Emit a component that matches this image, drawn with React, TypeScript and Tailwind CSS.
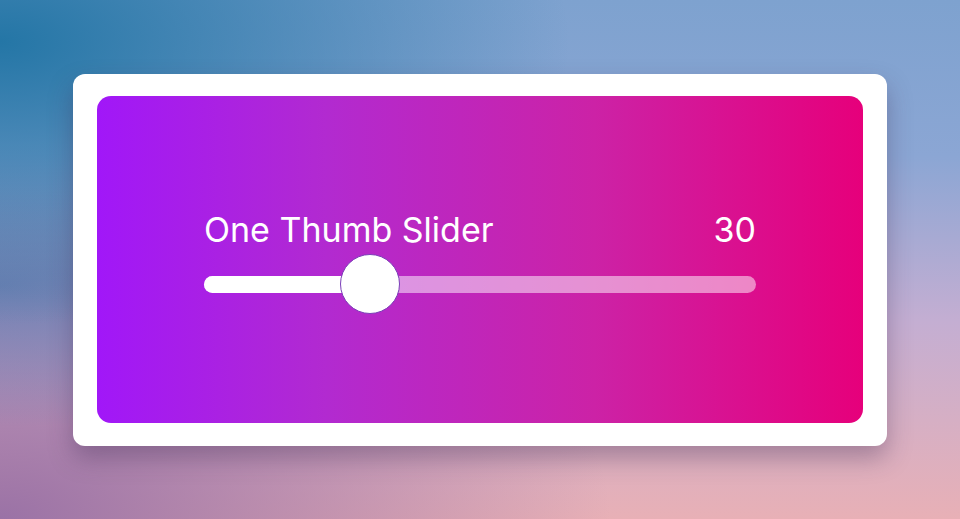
import React from "react";

const value = 30;

function OneThumbSlider() {
  return (
    <div className="w-full">
      <div className="flex items-baseline justify-between text-[34px] leading-[40px] text-white">
        <span>One Thumb Slider</span>
        <span>{value}</span>
      </div>
      <div className="relative mt-[4px] h-[60px]">
        <div className="absolute inset-x-0 top-[22px] h-[17px] rounded-full bg-white/50" />
        <div
          className="absolute left-0 top-[22px] h-[17px] rounded-full bg-white"
          style={{ width: `${value}%` }}
        />
        <div
          className="absolute top-0 h-[60px] w-[60px] -translate-x-1/2 rounded-full border-[1.5px] border-[#7b3fb8] bg-white"
          style={{ left: `${value}%` }}
        />
      </div>
    </div>
  );
}

export default function App() {
  return (
    <div
      className="flex h-[519px] w-full items-center justify-center bg-[radial-gradient(ellipse_at_0%_8%,#2476a6_0%,rgba(36,118,166,0)_42%),radial-gradient(ellipse_at_0%_55%,#6e80b2_0%,rgba(110,128,178,0)_35%),radial-gradient(ellipse_at_0%_100%,#9a72a6_0%,rgba(154,114,166,0)_45%),linear-gradient(180deg,#7ea2cf_0%,#8ba6d4_30%,#c4aed2_62%,#e8b0b6_100%)]"
      style={{ fontFamily: "Inter, 'Noto Sans', sans-serif" }}
    >
      <div className="h-[372px] w-[814px] rounded-[12px] bg-white px-[24px] pt-[22px] pb-[23px] shadow-[0_12px_24px_rgba(60,40,80,0.35)]">
        <div className="flex h-full flex-col rounded-[14px] bg-[linear-gradient(90deg,#a117f8_0%,#b22ad0_30%,#cc22a6_65%,#e6007b_100%)] px-[107px] pt-[114px]">
          <OneThumbSlider />
        </div>
      </div>
    </div>
  );
}
